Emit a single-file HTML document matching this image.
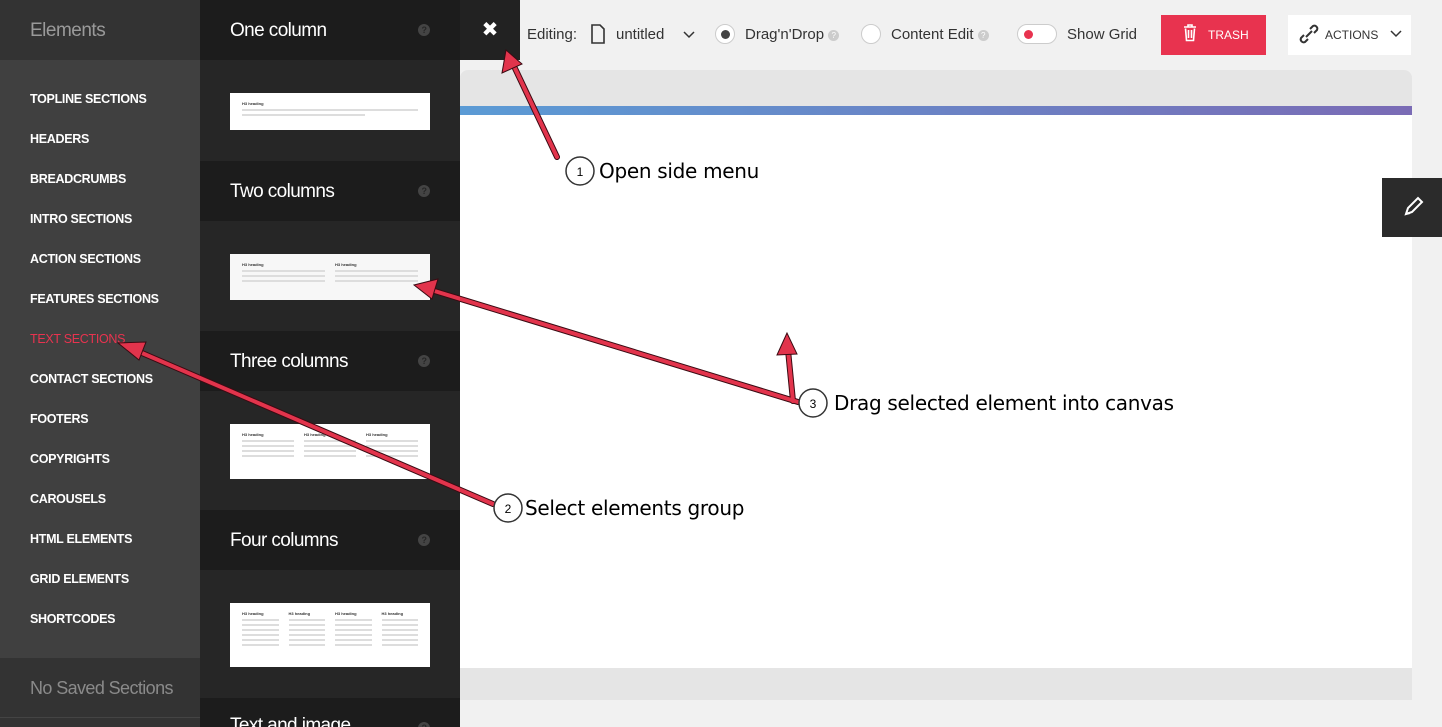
<!DOCTYPE html>
<html><head><meta charset="utf-8"><style>
*{margin:0;padding:0;box-sizing:border-box}
html,body{width:1442px;height:727px;overflow:hidden}
body{background:#f1f1f1;font-family:"Liberation Sans",Arial,sans-serif;position:relative}
.abs{position:absolute}
#left{left:0;top:0;width:200px;height:727px;background:#333;overflow:hidden}
#left .hd{height:60px;background:#333;color:#9a9a9a;font-size:19px;padding:20px 30px;letter-spacing:-0.5px}
#left .list{position:absolute;top:60px;height:598px;width:200px;background:#404040}
#left .list div{position:absolute;left:30px;color:#fff;font-size:12.5px;font-weight:bold;letter-spacing:-0.3px}
#left .saved{position:absolute;top:658px;height:60px;width:200px;border-bottom:1px solid #444;color:#8a8a8a;font-size:18px;padding:20px 30px;letter-spacing:-0.6px;white-space:nowrap}
#panel{left:200px;top:0;width:260px;height:727px;background:#262626;overflow:hidden}
.ph{position:absolute;left:0;width:260px;height:60px;background:#1c1c1c;color:#fff;font-size:19px;padding:20px 30px;letter-spacing:-0.6px}
.ph i{position:absolute;right:30px;top:24px;width:12px;height:12px;border-radius:50%;background:#444;color:#262626;font-size:9px;font-style:normal;text-align:center;line-height:12px;font-weight:bold}
.th{position:absolute;left:30px;width:200px;background:#fff;padding:8px 12px}
.th b{display:block;font-size:4px;color:#333;margin-bottom:3px}
.th span{display:block;height:2px;background:#ddd;margin-bottom:3px}
.cols{display:flex;gap:10px}.cols>div{flex:1}
#canvas{left:460px;top:70px;width:952px;height:630px;background:#e5e5e5;border-radius:8px 8px 0 0}
#grad{left:460px;top:106px;width:952px;height:9px;background:linear-gradient(90deg,#5b9bd5,#7a6bb5)}
#white{left:460px;top:115px;width:952px;height:553px;background:#fff}
#close{left:460px;top:0;width:60px;height:60px;background:#222;color:#fff;font-size:20px;text-align:center;line-height:60px}
.tb{position:absolute;top:26px;font-size:15px;color:#333}
.radio{position:absolute;top:24px;width:20px;height:20px;border-radius:50%;border:1px solid #ccc;background:#fff}
.q{display:inline-block;width:11px;height:11px;border-radius:50%;background:#ccc;color:#fff;font-size:8px;text-align:center;line-height:11px;vertical-align:1px}
#trash{left:1161px;top:15px;width:105px;height:40px;background:#e8334f;color:#fff;font-size:12px;line-height:40px;padding-left:47px}
#act{left:1288px;top:15px;width:123px;height:40px;background:#fff;font-size:12px;line-height:40px;padding-left:37px;color:#333}
#pen{left:1382px;top:178px;width:60px;height:59px;background:#2b2b2b}
.lbl{position:absolute;font-family:"DejaVu Sans",sans-serif;font-size:20px;color:#000;letter-spacing:-0.3px}
</style></head><body>
<div id="left" class="abs">
<div class="hd">Elements</div>
<div class="list">
<div style="top:32px">TOPLINE SECTIONS</div><div style="top:72px">HEADERS</div><div style="top:112px">BREADCRUMBS</div><div style="top:152px">INTRO SECTIONS</div><div style="top:192px">ACTION SECTIONS</div><div style="top:232px">FEATURES SECTIONS</div><div style="top:272px;color:#e8334f;font-weight:normal">TEXT SECTIONS</div><div style="top:312px">CONTACT SECTIONS</div><div style="top:352px">FOOTERS</div><div style="top:392px">COPYRIGHTS</div><div style="top:432px">CAROUSELS</div><div style="top:472px">HTML ELEMENTS</div><div style="top:512px">GRID ELEMENTS</div><div style="top:552px">SHORTCODES</div>
</div>
<div class="saved">No Saved Sections</div>
</div>
<div class="abs" style="left:200px;top:333px;width:0;height:0;border-top:6px solid transparent;border-bottom:6px solid transparent;border-left:6px solid #404040"></div>
<div id="panel" class="abs">
<div class="ph" style="top:0">One column<i>?</i></div>
<div class="th" style="top:93px;height:37px"><b>H3 heading</b><span></span><span style="width:70%"></span></div>
<div class="ph" style="top:161px">Two columns<i>?</i></div>
<div class="th" style="top:254px;height:46px;background:#f7f7f7"><div class="cols"><div><b>H3 heading</b><span></span><span></span><span></span></div><div><b>H3 heading</b><span></span><span></span><span></span></div></div></div>
<div class="ph" style="top:331px">Three columns<i>?</i></div>
<div class="th" style="top:424px;height:55px"><div class="cols"><div><b>H3 heading</b><span></span><span></span><span></span><span></span></div><div><b>H3 heading</b><span></span><span></span><span></span><span></span></div><div><b>H3 heading</b><span></span><span></span><span></span><span></span></div></div></div>
<div class="ph" style="top:510px">Four columns<i>?</i></div>
<div class="th" style="top:603px;height:64px"><div class="cols"><div><b>H3 heading</b><span></span><span></span><span></span><span></span><span></span><span></span></div><div><b>H3 heading</b><span></span><span></span><span></span><span></span><span></span><span></span></div><div><b>H3 heading</b><span></span><span></span><span></span><span></span><span></span><span></span></div><div><b>H3 heading</b><span></span><span></span><span></span><span></span><span></span><span></span></div></div></div>
<div class="ph" style="top:698px;padding-top:17px">Text and image<i>?</i></div>
</div>
<div id="canvas" class="abs"></div><div id="grad" class="abs"></div><div id="white" class="abs"></div>
<div id="close" class="abs">✖</div>
<div class="tb" style="left:527px">Editing:</div>
<svg class="abs" style="left:590px;top:24px" width="16" height="20" viewBox="0 0 16 20"><path d="M2 1h8l4 4v14H2z" fill="none" stroke="#333" stroke-width="1.6"/></svg>
<div class="tb" style="left:616px">untitled</div>
<svg class="abs" style="left:683px;top:31px" width="12" height="8"><path d="M1 1l5 5 5-5" fill="none" stroke="#333" stroke-width="1.5"/></svg>
<div class="radio" style="left:715px"><div style="position:absolute;left:5px;top:5px;width:9px;height:9px;border-radius:50%;background:#444"></div></div>
<div class="tb" style="left:745px">Drag'n'Drop <span class="q">?</span></div>
<div class="radio" style="left:861px"></div>
<div class="tb" style="left:891px">Content Edit <span class="q">?</span></div>
<div class="abs" style="left:1017px;top:24px;width:40px;height:20px;border-radius:10px;border:1px solid #ccc;background:#fff"><div style="position:absolute;left:6px;top:5px;width:9px;height:9px;border-radius:50%;background:#e8334f"></div></div>
<div class="tb" style="left:1067px">Show Grid</div>
<div id="trash" class="abs">TRASH</div>
<svg class="abs" style="left:1183px;top:24px" width="14" height="18" viewBox="0 0 14 18"><path d="M1 3h12M5 3V1h4v2M2.5 4.5l1 12h7l1-12M5.5 6v8M8.5 6v8" fill="none" stroke="#fff" stroke-width="1.6"/></svg>
<div id="act" class="abs">ACTIONS</div>
<svg class="abs" style="left:1298px;top:23px" width="22" height="22" viewBox="0 0 22 22"><path d="M8 14l6-6M6 12l-3 3a3 3 0 004 4l3-3M16 10l3-3a3 3 0 00-4-4l-3 3" fill="none" stroke="#333" stroke-width="2"/></svg>
<svg class="abs" style="left:1390px;top:30px" width="12" height="8"><path d="M1 1l5 5 5-5" fill="none" stroke="#333" stroke-width="1.5"/></svg>
<div id="pen" class="abs"><svg style="position:absolute;left:20px;top:18px" width="22" height="22" viewBox="0 0 22 22"><path d="M4 18l2-6L16 2l4 4-10 10z M4 18l4-1" fill="none" stroke="#fff" stroke-width="2"/></svg></div>
<svg class="abs" style="left:0;top:0" width="1442" height="727">
<g stroke="#3a0a12" stroke-width="6" fill="none" stroke-linecap="round"><path d="M557 157L512 62"/><path d="M493 504L135 350"/><path d="M798 402L428 289"/><path d="M793 401L788 350"/></g>
<g stroke="#e2344c" stroke-width="4" fill="none" stroke-linecap="round"><path d="M557 157L512 62"/><path d="M493 504L135 350"/><path d="M798 402L428 289"/><path d="M793 401L788 350"/></g>
<g fill="#e2344c" stroke="#3a0a12" stroke-width="1"><path d="M506 50L502 73 522 64z"/><path d="M118 343L139 360 146 342z"/><path d="M414 285L432 299 438 279z"/><path d="M787 333L777 355 797 354z"/></g>
<g fill="#fff" stroke="#333" stroke-width="1.5"><circle cx="580" cy="171" r="14"/><circle cx="508" cy="508" r="14"/><circle cx="813" cy="403" r="14"/></g>
<g font-family="Liberation Sans,sans-serif" font-size="12" text-anchor="middle" fill="#000"><text x="580" y="176">1</text><text x="508" y="513">2</text><text x="813" y="408">3</text></g>
</svg>
<div class="lbl" style="left:599px;top:159px">Open side menu</div>
<div class="lbl" style="left:525px;top:496px">Select elements group</div>
<div class="lbl" style="left:834px;top:391px">Drag selected element into canvas</div>
</body></html>
